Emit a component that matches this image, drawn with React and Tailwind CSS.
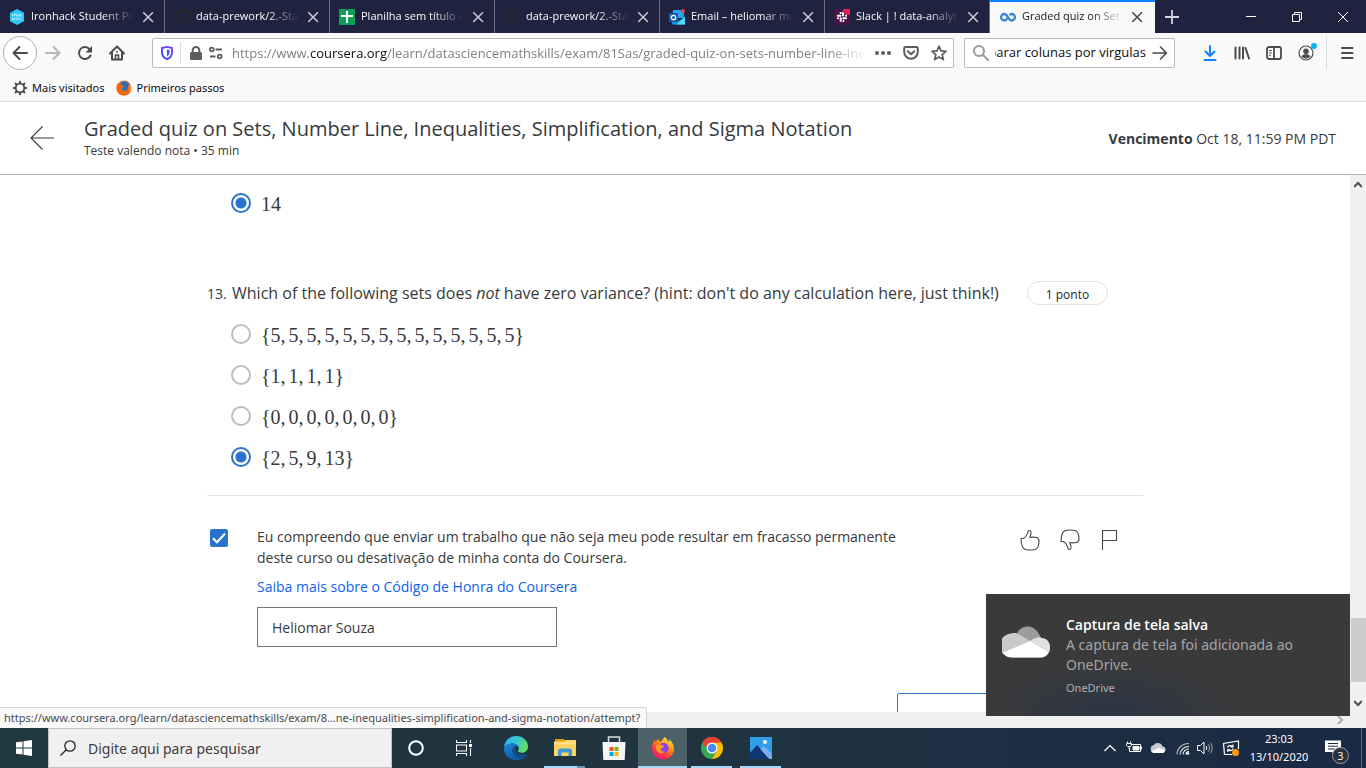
import React from "react";

function CloseIcon({ className }) {
  return (
    <svg viewBox="0 0 16 16" className={className} fill="none" stroke="currentColor" strokeWidth="1.6" strokeLinecap="round">
      <path d="M3.700 3.700l8.800 8.800M12.500 3.700l-8.800 8.800" />
    </svg>
  );
}

function IronhackIcon() {
  return (
    <svg viewBox="0 0 16 16" className="size-4 shrink-0">
      <path d="M8 0l7 3.800v8.400L8 16l-7-3.800V3.800z" fill="#2dc5fa" />
      <path d="M3.500 5.200v2.200M5 5.200h1.400v1H5zM5 7.400V5M7.600 5.200h1.600v2H7.600zM10.400 7.400V5.200l1.600 2.200V5M3.600 9v2M5.200 9v2M3.600 10h1.600M7 11V9.200h1V11M9.800 9.200h1M9.800 9.200V11h1M12 9v2" stroke="#d5f4ff" strokeWidth=".7" fill="none" />
    </svg>
  );
}

function GithubIcon() {
  return (
    <svg viewBox="0 0 16 16" className="size-4 shrink-0" fill="#24292e">
      <path d="M8 0C3.58 0 0 3.58 0 8c0 3.54 2.29 6.53 5.47 7.59.4.07.55-.17.55-.38 0-.19-.01-.82-.01-1.49-2.01.37-2.53-.49-2.69-.94-.09-.23-.48-.94-.82-1.13-.28-.15-.68-.52-.01-.53.63-.01 1.08.58 1.23.82.72 1.21 1.87.87 2.33.66.07-.52.28-.87.51-1.07-1.78-.2-3.64-.89-3.64-3.95 0-.87.31-1.59.82-2.15-.08-.2-.36-1.02.08-2.12 0 0 .67-.21 2.2.82.64-.18 1.32-.27 2-.27s1.36.09 2 .27c1.53-1.04 2.2-.82 2.2-.82.44 1.1.16 1.92.08 2.12.51.56.82 1.27.82 2.15 0 3.07-1.87 3.75-3.65 3.95.29.25.54.73.54 1.48 0 1.07-.01 1.93-.01 2.2 0 .21.15.46.55.38A8.01 8.01 0 0016 8c0-4.42-3.58-8-8-8z" />
    </svg>
  );
}

function SheetsIcon() {
  return (
    <svg viewBox="0 0 16 16" className="size-4 shrink-0">
      <rect width="16" height="16" rx="1" fill="#0f9d58" />
      <path d="M7 2h2v4h5v2H9v6H7V8H2V6h5z" fill="#fff" />
    </svg>
  );
}

function OutlookIcon() {
  return (
    <svg viewBox="0 0 16 16" className="size-4 shrink-0">
      <path d="M4 1h11v8H4z" fill="#28a8ea" />
      <path d="M4 5h5v4H4z" fill="#0364b8" />
      <path d="M3 8l6 4 7-4v7.500H3z" fill="#1490df" />
      <path d="M16 8l-9 7.500h9z" fill="#50d9ff" />
      <rect y="4" width="9" height="9" rx=".6" fill="#0a5fb4" />
      <circle cx="4.500" cy="8.500" r="2.200" fill="none" stroke="#fff" strokeWidth="1.300" />
      <circle cx="14" cy="2" r="2" fill="#e8413c" />
    </svg>
  );
}

function SlackIcon() {
  return (
    <svg viewBox="0 0 16 16" className="size-4 shrink-0">
      <rect width="16" height="16" rx="1" fill="#4a154b" />
      <path d="M9 3.800v2.700M3.800 6.700h2.700M6.700 9.300V12M9.300 9.300H12" stroke="#fff" strokeWidth="2" strokeLinecap="round" />
      <path d="M6.500 3.900h.2M12 6.800h.1M3.900 9.300h.1M9.300 12h.1" stroke="#fff" strokeWidth="2" strokeLinecap="round" />
      <path d="M9 0h7v6h-4.500L9 3z" fill="#e01e5a" />
    </svg>
  );
}

function CourseraIcon() {
  return (
    <svg viewBox="0 0 16 16" className="size-4 shrink-0" fill="none" stroke="#3b87d3" strokeWidth="2.300">
      <path d="M8 8.200C6.800 10.300 5.800 11.500 4.300 11.500a3.200 3.200 0 010-6.500C6 5 6.900 6.100 8 8.200s2 3.300 3.700 3.300a3.200 3.200 0 000-6.500c-.9 0-1.600.4-2.200 1" />
    </svg>
  );
}

const tabs = [
  { title: "Ironhack Student Po", Icon: IronhackIcon },
  { title: "data-prework/2.-Sta", Icon: GithubIcon },
  { title: "Planilha sem título -", Icon: SheetsIcon },
  { title: "data-prework/2.-Sta", Icon: GithubIcon },
  { title: "Email – heliomar ma", Icon: OutlookIcon },
  { title: "Slack | ! data-analyti", Icon: SlackIcon },
  { title: "Graded quiz on Sets,", Icon: CourseraIcon, active: true },
];

function TabBar() {
  return (
    <div className="flex h-[33px] shrink-0 bg-[#202340] text-[11px] text-[#f9f9fa]">
      {tabs.map(({ title, Icon, active }, i) => (
        <div
          key={i}
          className={
            active
              ? "flex w-[165px] min-w-0 items-center gap-1.5 border-t-2 border-[#0a84ff] bg-[#f9f9fa] pr-2.5 pl-2.5 pb-0.5 text-[#15141a]"
              : "flex w-[165px] min-w-0 items-center gap-1.5 border-r border-[#6b6d80] pr-2 pl-[9px]"
          }
        >
          <Icon />
          <span className="min-w-0 flex-1 whitespace-nowrap [mask-image:linear-gradient(to_left,transparent,black_32px)]">{title}</span>
          <button aria-label="Fechar aba" className={active ? "text-[#4a4a4f]" : "text-[#c8c8d2]"}>
            <CloseIcon className="size-4" />
          </button>
        </div>
      ))}
      <button aria-label="Nova aba" className="grid w-[34px] place-items-center text-[#d5d5dd]">
        <svg viewBox="0 0 16 16" className="size-4" stroke="currentColor" strokeWidth="1.800"><path d="M8 1v14M1 8h14" /></svg>
      </button>
      <div className="ml-auto flex">
        <button aria-label="Minimizar" className="grid w-[46px] place-items-center">
          <svg viewBox="0 0 10 10" className="size-2.5" stroke="#fff"><path d="M0 4.500h10" /></svg>
        </button>
        <button aria-label="Restaurar" className="grid w-[46px] place-items-center">
          <svg viewBox="0 0 10 10" className="size-2.5" fill="none" stroke="#fff"><path d="M.5 2.500h7v7h-7zM2.500 2.500v-2h7v7h-2" /></svg>
        </button>
        <button aria-label="Fechar" className="grid w-[46px] place-items-center">
          <svg viewBox="0 0 10 10" className="size-2.5" stroke="#fff"><path d="M0 0l10 10M10 0L0 10" /></svg>
        </button>
      </div>
    </div>
  );
}

function ToolButton({ label, className, children }) {
  return (
    <button aria-label={label} className={"grid h-8 w-8 shrink-0 place-items-center " + (className || "text-[#4a4a4f]")}>
      {children}
    </button>
  );
}

const stroke = { fill: "none", stroke: "currentColor", strokeWidth: 2, strokeLinecap: "round", strokeLinejoin: "round" };

function NavBar() {
  return (
    <div className="flex h-10 shrink-0 items-center bg-[#f9f9fa] px-[3px]">
      <button aria-label="Voltar" className="grid size-[34px] shrink-0 place-items-center rounded-full border border-[#b1b1b3] bg-white text-[#4a4a4f]">
        <svg viewBox="0 0 16 16" className="size-4" {...stroke}><path d="M15 8H1.500M7.500 2l-6 6 6 6" /></svg>
      </button>
      <ToolButton label="Avançar" className="text-[#b5b5b8]">
        <svg viewBox="0 0 16 16" className="size-4" {...stroke}><path d="M1 8h13.500M8.500 2l6 6-6 6" /></svg>
      </ToolButton>
      <ToolButton label="Recarregar">
        <svg viewBox="0 0 16 16" className="size-4" {...stroke}>
          <path d="M13.500 10.500A6 6 0 118 2c2 0 3.700 1 4.800 2.500" />
          <path d="M15 1v6.500H8.500z" fill="currentColor" stroke="none" />
        </svg>
      </ToolButton>
      <ToolButton label="Página inicial">
        <svg viewBox="0 0 16 16" className="size-4" {...stroke}>
          <path d="M1 8.500L8 1.500l7 7M3 8v6.500h10V8" />
          <path d="M6.500 14v-4h3v4M8 6.500v.5" strokeWidth="1.600" />
        </svg>
      </ToolButton>
      <div className="ml-[19px] flex h-[30px] min-w-0 flex-1 items-center rounded-xs border border-[#b8b8ba] bg-white text-[#5b5b60]">
        <svg viewBox="0 0 16 16" className="ml-1.5 size-4 shrink-0">
          <defs><linearGradient id="shield" x1="0" y1="1" x2="1" y2="0"><stop stopColor="#2b4ff0" /><stop offset="1" stopColor="#8b3ff5" /></linearGradient></defs>
          <path d="M8 1.800l5 1.200v4.500c0 3-1.800 5.300-5 6.700-3.200-1.400-5-3.700-5-6.700V3z" fill="none" stroke="url(#shield)" strokeWidth="1.900" strokeLinejoin="round" />
          <path d="M8 4.500v7c-1.600-.8-2.500-2.200-2.500-4v-2.500z" fill="#3f4cf2" transform="matrix(-1 0 0 1 16 0)" />
        </svg>
        <span className="mx-[5px] h-[22px] w-px shrink-0 bg-[#dcdcde]" />
        <svg viewBox="0 0 16 16" className="ml-0.5 size-4 shrink-0">
          <rect x="2" y="7" width="12" height="8" rx="1.500" fill="currentColor" />
          <path d="M4.700 8V5.200a3.300 3.300 0 016.600 0V8" fill="none" stroke="currentColor" strokeWidth="2" />
        </svg>
        <svg viewBox="0 0 16 16" className="ml-1 size-4 shrink-0" fill="none" stroke="currentColor" strokeWidth="1.800">
          <circle cx="3.800" cy="4.500" r="1.900" /><path d="M7.500 4.500H14M2 11.500h5.500" /><circle cx="11.700" cy="11.500" r="1.900" />
        </svg>
        <span className="ml-2 min-w-0 flex-1 pt-0.5 text-[13px] whitespace-nowrap text-[#808085] [mask-image:linear-gradient(to_left,transparent,black_40px)]">
          https://www.<span className="text-[#0c0c0d]">coursera.org</span>/learn/datasciencemathskills/exam/81Sas/graded-quiz-on-sets-number-line-ine
        </span>
        <button aria-label="Ações da página" className="ml-2">
          <svg viewBox="0 0 16 16" className="size-4" fill="currentColor"><circle cx="2" cy="8" r="2" /><circle cx="8" cy="8" r="2" /><circle cx="14" cy="8" r="2" /></svg>
        </button>
        <button aria-label="Salvar no Pocket" className="ml-3">
          <svg viewBox="0 0 16 16" className="size-4" {...stroke}><path d="M2.500 2h11c.8 0 1.300.5 1.300 1.300V7a6.800 6.800 0 01-13.600 0V3.300C1.200 2.500 1.700 2 2.500 2z" /><path d="M4.800 6.300L8 9.300l3.200-3" /></svg>
        </button>
        <button aria-label="Favoritar" className="mr-1.5 ml-3">
          <svg viewBox="0 0 16 16" className="size-4" {...stroke} strokeWidth="1.700"><path d="M8 1.200l2 4.600 5 .5-3.800 3.300 1.200 5L8 12l-4.400 2.600 1.200-5L1 6.300l5-.5z" /></svg>
        </button>
      </div>
      <div className="ml-2.5 flex h-[30px] w-[211px] shrink-0 items-center rounded-xs border border-[#b8b8ba] bg-white pr-1.5 pl-2">
        <svg viewBox="0 0 16 16" className="size-4 shrink-0 text-[#9b9b9e]" {...stroke}><circle cx="6" cy="6" r="5" /><path d="M10 10l5 5" /></svg>
        <label className="ml-1.5 flex h-5 min-w-0 flex-1 justify-end overflow-hidden">
          <input aria-label="Pesquisar" className="w-[190px] shrink-0 bg-transparent text-right text-[13px] text-[#0c0c0d] outline-none" defaultValue="parar colunas por virgulas" />
        </label>
        <button aria-label="Ir" className="ml-1.5 text-[#4a4a4f]">
          <svg viewBox="0 0 16 16" className="size-4" {...stroke} strokeWidth="1.600"><path d="M1 8h13.500M8.500 2l6 6-6 6" /></svg>
        </button>
      </div>
      <div className="ml-[19px] flex items-center">
        <ToolButton label="Downloads" className="text-[#0a84ff]">
          <svg viewBox="0 0 16 16" className="size-4" {...stroke}><path d="M8 1v9.500M3.500 6.500L8 11l4.500-4.500M2.500 15h11" /></svg>
        </ToolButton>
        <ToolButton label="Biblioteca">
          <svg viewBox="0 0 16 16" className="size-4" {...stroke}><path d="M1.500 2.500v11M5.500 2.500v11M9 2.500v11M11.500 3L15 13.500" /></svg>
        </ToolButton>
        <ToolButton label="Barra lateral">
          <svg viewBox="0 0 16 16" className="size-4" {...stroke} strokeWidth="1.800"><rect x="1" y="2" width="14" height="12" rx="2" /><path d="M8 2v12" /><path d="M3.500 5.500h2M3.500 8h2M3.500 10.500h1" strokeWidth="1" /></svg>
        </ToolButton>
        <div className="relative">
          <ToolButton label="Conta">
            <svg viewBox="0 0 16 16" className="size-4" fill="currentColor"><circle cx="8" cy="8" r="7" fill="none" stroke="currentColor" strokeWidth="1.200" /><circle cx="8" cy="6.300" r="2.800" /><path d="M3.500 11.500c1-1.800 2.500-2.300 4.500-2.300s3.500.5 4.500 2.300A5.600 5.600 0 018 13.500a5.600 5.600 0 01-4.500-2z" /></svg>
          </ToolButton>
          <span className="absolute top-1.5 right-[5px] size-1.5 rounded-full bg-[#00b3f4]" />
        </div>
        <span className="mr-1 ml-1 h-[34px] w-px bg-[#dcdcde]" />
        <ToolButton label="Menu">
          <svg viewBox="0 0 16 16" className="size-4" {...stroke}><path d="M3 3h10.500M3 8h10.500M3 13h10.500" /></svg>
        </ToolButton>
      </div>
    </div>
  );
}

function FirefoxIcon({ className }) {
  return (
    <svg viewBox="0 0 24 24" className={className}>
      <defs>
        <linearGradient id="fx" x1=".8" y1="0" x2=".2" y2="1"><stop stopColor="#fff44f" /><stop offset=".35" stopColor="#ff980e" /><stop offset=".7" stopColor="#ff3647" /><stop offset="1" stopColor="#e31587" /></linearGradient>
      </defs>
      <path d="M13 1c3 1.200 4 3.500 4.200 5 1-.5 1-1.800.8-2.700 3 2.500 5 5.600 5 9.500C23 19 18 23.500 12 23.500S1 18.500 1 12.500C1 9 2 6 3.800 3.800c0 1 .2 1.800.8 2.500C5.500 4.500 6.500 3.500 7.500 3c0 1.200.5 2.200 1.500 2.800 1.800-1 3.800-2.600 4-4.800z" fill="url(#fx)" />
      <circle cx="12.500" cy="12" r="5" fill="#8a3ff0" />
      <path d="M5 10c2-1.800 4.500-1.800 6.500-.8 1.500.5 2 1.300 1.300 2-1.500.3-3 .8-3 2.300 0 1.700 2 2.500 4 1.800-1 1.700-3 2.500-5.300 1.900C6 16.300 4.500 13.500 5 10z" fill="#ff9a1f" />
    </svg>
  );
}

function Bookmarks() {
  return (
    <nav className="flex h-[29px] shrink-0 items-center gap-3 border-b border-[#dcdcde] bg-[#f9f9fa] px-3 pt-0.5 font-['Noto_Sans',sans-serif] text-[11px] text-[#0c0c0d]">
      <a href="#visitados" className="flex items-center gap-1">
        <svg viewBox="0 0 16 16" className="size-4" fill="none" stroke="#4a4a4f">
          <circle cx="8" cy="8" r="4.300" strokeWidth="1.800" />
          <path d="M8 1v3M8 12v3M1 8h3M12 8h3M3 3l2.200 2.200M10.800 10.800L13 13M13 3l-2.200 2.200M5.200 10.800L3 13" strokeWidth="2" />
        </svg>
        Mais visitados
      </a>
      <a href="#passos" className="flex items-center gap-1">
        <svg viewBox="0 0 16 16" className="size-4">
          <circle cx="8" cy="8" r="7.500" fill="#f07c12" />
          <circle cx="8.500" cy="6.500" r="5.300" fill="#2f6bbd" />
          <path d="M1 4c2-1 3.500 0 5 1 1 .6 2.500.5 2 1.700-.8 1.200-2 1-2 2.400 0 1.500 2.500 2.200 5 .8 1.200-.8 1.600-2.800 1.500-5.400C15 7 15.500 9 14.500 11.500 13 14.500 10.500 15.500 8 15.500 3.500 15.500.5 12.500.5 8c0-1.500 0-2.800.5-4z" fill="#ee6a12" />
          <path d="M13 4c2 2.500 2 6 .3 8.500.3-2.500.5-5.500-.3-8.500z" fill="#fdc820" />
        </svg>
        Primeiros passos
      </a>
    </nav>
  );
}

function QuizHeader() {
  return (
    <header className="flex h-[73px] shrink-0 items-center border-b border-[#b5b5b5] bg-white pr-[30px] pl-[30px] text-[#373a3c]">
      <a href="#voltar" aria-label="Voltar ao curso">
        <svg viewBox="0 0 24 24" className="size-6" fill="none" stroke="#373a3c" strokeWidth="1.100"><path d="M24 12H1M12.500 .5L1 12l11.500 11.500" /></svg>
      </a>
      <div className="ml-[30px] flex-1 pt-0.5">
        <h1 className="text-[20px] leading-6">Graded quiz on Sets, Number Line, Inequalities, Simplification, and Sigma Notation</h1>
        <p className="text-[12px] leading-5">Teste valendo nota • 35 min</p>
      </div>
      <p className="text-[14px]"><b>Vencimento</b> Oct 18, 11:59 PM PDT</p>
    </header>
  );
}

function Option({ name, items, set, checked }) {
  return (
    <label className="flex h-[41px] items-center gap-2.5 pl-6">
      <input
        type="radio"
        name={name}
        defaultChecked={checked}
        className="size-5 appearance-none rounded-full border-2 border-[#bdbdbd] bg-white checked:border-[#2a73cc] checked:bg-[radial-gradient(circle,#2a73cc_5px,white_6px)]"
      />
      <span className="pt-0.5 font-['Liberation_Serif',serif] text-[20px] text-[#373a3c]">
        {set && "{"}
        {items.map((n, i) => (
          <span key={i} className="not-last:mr-[3px]">{i < items.length - 1 ? n + "," : set ? n + "}" : n}</span>
        ))}
      </span>
    </label>
  );
}

function Quiz() {
  return (
    <main className="mx-auto w-full max-w-[936px] text-[#373a3c]">
      <div className="pt-[7px]">
        <Option name="q12" items={[14]} checked />
      </div>
      <fieldset className="mt-[58px]">
        <div className="flex h-6 items-center">
          <span className="w-[25px] text-[14px]">13.</span>
          <span className="flex-1 text-[16px]">
            Which of the following sets does <i>not</i> have zero variance? (hint: don't do any calculation here, just think!)
          </span>
          <span className="mr-[35px] flex h-6 w-[81px] items-center justify-center rounded-full border border-[#e1e1e1] pt-1 text-[12px] text-[#1f1f1f]">1 ponto</span>
        </div>
        <div className="pt-2">
          <Option name="q13" set items={Array(14).fill(5)} />
          <Option name="q13" set items={[1, 1, 1, 1]} />
          <Option name="q13" set items={Array(7).fill(0)} />
          <Option name="q13" set items={[2, 5, 9, 13]} checked />
        </div>
      </fieldset>
      <div className="mt-[18px] flex items-start border-t border-[#e1e1e1] pt-[30px]">
        <span className="relative mt-[3px] ml-[3px] block size-[18px]">
          <input id="honor" type="checkbox" defaultChecked className="block size-[18px] appearance-none rounded-xs bg-[#2a73cc]" />
          <svg viewBox="0 0 18 18" className="pointer-events-none absolute inset-0" fill="none" stroke="#fff" strokeWidth="2"><path d="M3 9.200l4 4 8-8.700" /></svg>
        </span>
        <div className="ml-[29px] flex-1 text-[14px] leading-[21px]">
          <label htmlFor="honor" className="block max-w-[660px]">
            Eu compreendo que enviar um trabalho que não seja meu pode resultar em fracasso permanente deste curso ou desativação de minha conta do Coursera.
          </label>
          <a href="#honra" className="mt-2 block text-[#0f62e6]">Saiba mais sobre o Código de Honra do Coursera</a>
          <input aria-label="Nome" defaultValue="Heliomar Souza" className="mt-2.5 block h-10 w-[300px] border border-[#757575] px-3.5" />
        </div>
        <div className="mt-[3px] mr-[22px] flex gap-[18px] text-[#41474f]">
          <button aria-label="Gostei">
            <svg viewBox="0 0 22 22" className="size-[22px]" fill="none" stroke="currentColor" strokeWidth="1.100" strokeLinejoin="round"><path d="M2 9.500h2.500c2.500-1.500 3.800-4 4.500-7C9.400 1 11.600 1 12 3c.2 2-.5 3.700-1.200 5.500 2-.5 4.500-.5 6.700 0 2 .5 2.700 2.500 2.500 4.500-.2 3.500-1 6.500-4 7.500-3 .6-7 .6-9.500 0C3.500 19.500 2 15 2 9.500z" /></svg>
          </button>
          <button aria-label="Não gostei">
            <svg viewBox="0 0 22 22" className="size-[22px]" fill="none" stroke="currentColor" strokeWidth="1.100" strokeLinejoin="round"><path d="M2 12.500h2.500c2.500 1.500 3.800 4 4.500 7 .4 1.500 2.600 1.500 3-.5.2-2-.5-3.700-1.200-5.500 2 .5 4.500.5 6.700 0 2-.5 2.700-2.500 2.500-4.500-.2-3.500-1-6.500-4-7.500-3-.6-7-.6-9.500 0C3.500 2.500 2 7 2 12.500z" /></svg>
          </button>
          <button aria-label="Sinalizar">
            <svg viewBox="0 0 22 22" className="size-[22px]" fill="none" stroke="currentColor" strokeWidth="1.100"><path d="M3.500 21V1.500h14v10h-14" /></svg>
          </button>
        </div>
      </div>
      <div className="mt-[46px] flex justify-end">
        <button aria-label="Enviar" className="h-12 w-[246px] rounded-xs border border-[#2a73cc] bg-white" />
      </div>
    </main>
  );
}

function Chevron({ d }) {
  return (
    <svg viewBox="0 0 8 8" className="size-2" fill="none" stroke="currentColor" strokeWidth="2"><path d={d} /></svg>
  );
}

function Toast() {
  return (
    <aside className="absolute right-4 bottom-3 flex h-[122px] w-[364px] bg-[#3a3a3a] bg-[radial-gradient(ellipse_130px_60px_at_35%_100%,#2c3545,transparent)] pt-[21px] pl-4">
      <svg viewBox="0 0 48 32" className="mt-[11px] h-8 w-12 shrink-0">
        <defs><clipPath id="cloud"><path d="M10 31.500a10.500 10.500 0 010-24c2-.6 3.500-.5 5 0C18 1 26-1.500 32 2.500c4 2.500 5.500 6 7 9.500 5.500 0 9 4 9 9.500s-4 10-9 10z" /></clipPath></defs>
        <g clipPath="url(#cloud)">
          <rect width="48" height="32" fill="#9c9c9c" />
          <path d="M0 6h12c4 1 9 5 16 9L0 28z" fill="#c9c9c9" />
          <path d="M28 15c3-2 8-5 20-4v16z" fill="#e0e0e0" />
          <path d="M0 27l28-12 20 12v5H0z" fill="#fff" />
        </g>
      </svg>
      <div className="ml-4 text-[14px] leading-5 text-[#a5a5a5]">
        <p className="font-semibold text-white">Captura de tela salva</p>
        <p className="w-60 font-['Noto_Sans',sans-serif]">A captura de tela foi adicionada ao OneDrive.</p>
        <p className="mt-[3px] font-['Noto_Sans',sans-serif] text-[11px] text-[#b0b0b0]">OneDrive</p>
      </div>
    </aside>
  );
}

function Viewport() {
  return (
    <section className="relative flex min-h-0 flex-1">
      <div className="flex min-w-0 flex-1 flex-col">
        <div className="min-h-0 flex-1 overflow-hidden bg-white"><Quiz /></div>
        <div className="flex h-4 shrink-0 items-center justify-end bg-[#f0f0f0] pr-1.5 text-[#a8a8a8]"><Chevron d="M2 0l4 4-4 4" /></div>
      </div>
      <div className="flex w-4 shrink-0 flex-col items-center justify-between bg-[#f0f0f0] pt-1.5 pb-[21px] text-[#505050]">
        <Chevron d="M0 6l4-4 4 4" />
        <div className="mt-auto mb-[17px] h-16 w-[15px] bg-[#cdcdcd]" />
        <Chevron d="M0 2l4 4 4-4" />
      </div>
      <div className="absolute bottom-0 left-0 h-[21px] rounded-tr-xs border-t border-r border-[#d5d5d5] bg-[#f9f9fa] pr-1.5 pl-1 font-['Noto_Sans',sans-serif] text-[11px] leading-5 text-[#4a4a4f]">
        https://www.coursera.org/learn/datasciencemathskills/exam/8...ne-inequalities-simplification-and-sigma-notation/attempt?
      </div>
      <Toast />
    </section>
  );
}

function AppButton({ label, state, children }) {
  return (
    <button aria-label={label} className={"relative grid h-10 w-[49px] place-items-center " + (state === "active" ? "bg-[#4e6068]" : "")}>
      {children}
      {state === "active" && <span className="absolute inset-x-0 bottom-0 h-0.5 bg-[#a5d8fb]" />}
      {state === "open" && <span className="absolute inset-x-1 bottom-0 h-0.5 bg-[#a5d8fb]" />}
      {state === "many" && <span className="absolute inset-x-1 bottom-0 h-0.5 border-r-8 border-[#6f93ab] bg-[#a5d8fb]" />}
    </button>
  );
}

function Taskbar() {
  return (
    <footer className="flex h-10 shrink-0 items-center bg-linear-to-r from-[#20373f] via-[#20343f] to-[#1a2944] text-white">
      <button aria-label="Iniciar" className="grid h-10 w-12 place-items-center">
        <svg viewBox="0 0 16 16" className="size-4" fill="#fff"><path d="M0 2.300L6.500 1.400v6.100H0zM7.500 1.200L16 0v7.500H7.500zM0 8.500h6.500v6.100L0 13.700zM7.500 8.500H16V16l-8.500-1.200z" /></svg>
      </button>
      <label className="flex h-10 w-[344px] items-center gap-3 border border-[#c2c2c2] bg-[#f0f0f0] px-[11px]">
        <svg viewBox="0 0 16 16" className="size-4 shrink-0" fill="none" stroke="#222" strokeWidth="1.300"><circle cx="10" cy="6" r="5.200" /><path d="M6.300 9.700L.5 15.500" /></svg>
        <input aria-label="Pesquisar no computador" placeholder="Digite aqui para pesquisar" className="min-w-0 flex-1 bg-transparent font-['Noto_Sans',sans-serif] text-[14px] outline-none placeholder:text-[#3d3d3d]" />
      </label>
      <button aria-label="Cortana" className="grid h-10 w-12 place-items-center">
        <svg viewBox="0 0 16 16" className="size-4" fill="none" stroke="#fff" strokeWidth="2"><circle cx="8" cy="8" r="6.800" /></svg>
      </button>
      <button aria-label="Visão de tarefas" className="grid h-10 w-12 place-items-center">
        <svg viewBox="0 0 16 16" className="size-4" fill="none" stroke="#fff" strokeWidth="1.100"><path d="M.5 0v2.500h10V0M.5 5h10v6H.5zM.5 16v-2.500h10V16M14.500 0v3M14.500 8v8" /><path d="M13 4h3v3h-3z" fill="#fff" stroke="none" /></svg>
      </button>
      <div className="ml-[3px] flex">
        <AppButton label="Edge">
          <svg viewBox="0 0 24 24" className="size-6">
            <defs>
              <linearGradient id="edgeTop" x1="0" y1=".3" x2="1" y2=".6"><stop stopColor="#2bb3ee" /><stop offset=".5" stopColor="#35c8d5" /><stop offset="1" stopColor="#68e04f" /></linearGradient>
              <linearGradient id="edgeLow" x1="0" y1="0" x2=".6" y2="1"><stop stopColor="#1c87d8" /><stop offset="1" stopColor="#0c59a4" /></linearGradient>
            </defs>
            <path d="M0 11.500C.5 5 5.500 0 12 0c7 0 12 5 12 10.500 0 4-3 6.300-6.200 6.300-2.500 0-4-.8-4-1.500 0-.6 1-1 1-2.800C14.800 10 12 7.500 8.500 7.500 4.500 7.500 1.500 9.500 0 11.500z" fill="url(#edgeTop)" />
            <path d="M0 12.500C1 9.500 4.500 7.500 8.500 7.500c2.500 0 4.500 1 5.500 2.500-3-1-5.500 1-5.500 4.500 0 4.500 4 7 8 7 2.500 0 4.500-1 5.700-2C20 22.500 16.500 24 12.500 24 5 24-.5 18.500 0 12.500z" fill="url(#edgeLow)" />
            <path d="M8.500 14.500c0-3 2-5 5-4.500-2 1.500-2.500 4-1 6 2.500 3 7 3 10.200 1.500.5 0 .6.500.4 1C19 23 9 22 8.500 14.500z" fill="#134f8d" />
          </svg>
        </AppButton>
        <AppButton label="Explorador de Arquivos" state="many">
          <svg viewBox="0 0 22 20" className="h-5 w-[22px]">
            <path d="M1 1h9l1 2h-1v4H1z" fill="#e09d0c" /><path d="M0 3.500h10L11 2h11v16H0z" fill="#fcd462" /><path d="M0 4h22v2H0z" fill="#ffe08a" />
            <path d="M4 18v-5c0-1.500.8-2.500 2.500-2.500h9c1.700 0 2.500 1 2.500 2.500v5h-3.500v-3.500h-7V18z" fill="#3d97dc" />
          </svg>
        </AppButton>
        <AppButton label="Microsoft Store">
          <svg viewBox="0 0 24 24" className="size-6">
            <path d="M6.500 6V1h11v5" fill="none" stroke="#dcdcdc" strokeWidth="1.500" /><path d="M.5 6h23l-.8 18H1.300z" fill="#f5f5f5" />
            <path d="M7.500 11h4v4h-4z" fill="#f25022" /><path d="M12.500 11h4v4h-4z" fill="#7fba00" /><path d="M7.500 16h4v4h-4z" fill="#00a4ef" /><path d="M12.500 16h4v4h-4z" fill="#ffb900" />
          </svg>
        </AppButton>
        <AppButton label="Firefox" state="active"><FirefoxIcon className="size-6" /></AppButton>
        <AppButton label="Chrome" state="open">
          <svg viewBox="0 0 24 24" className="size-6">
            <path d="M12 12L2.470 6.500A11 11 0 0121.530 6.500z" fill="#e94335" />
            <path d="M12 12V6.500h9.530A11 11 0 0112 23l-1-1z" fill="#fbbc05" />
            <path d="M12 12l4.760 2.750L12 23A11 11 0 012.470 6.500z" fill="#34a853" />
            <path d="M12 6.500H2.470A11 11 0 0121.530 6.500z" fill="#e94335" />
            <path d="M2.470 6.500L7.240 14.750 12 12l-.5-5.500z" fill="#34a853" />
            <path d="M2.470 6.500h9.530l-4.760 8.250z" fill="#34a853" />
            <path d="M2.470 6.500A11 11 0 0112 1v5.500a5.500 5.500 0 00-4.760 2.750l-1.500 3z" fill="#e94335" />
            <circle cx="12" cy="12" r="5.500" fill="#fff" /><circle cx="12" cy="12" r="4.300" fill="#4a8af4" />
          </svg>
        </AppButton>
        <AppButton label="Fotos" state="open">
          <svg viewBox="0 0 22 22" className="size-[22px]">
            <rect width="22" height="22" fill="#2c9eea" /><path d="M0 16l7-8 13 14H0z" fill="#123a78" /><path d="M10 12l4-3 8 8v5h-3z" fill="#7aaeea" /><path d="M0 16l7-7 12 13H0z" fill="#0f3672" /><circle cx="15" cy="5" r="2" fill="#fff" />
          </svg>
        </AppButton>
      </div>
      <div className="ml-auto flex items-center">
        <button aria-label="Ícones ocultos" className="grid w-6 place-items-center">
          <svg viewBox="0 0 12 12" className="size-3" fill="none" stroke="#fff" strokeWidth="1.200"><path d="M.5 9L6 3.500 11.500 9" /></svg>
        </button>
        <button aria-label="Bateria" className="grid w-6 place-items-center">
          <svg viewBox="0 0 16 16" className="size-4" fill="none" stroke="#fff"><path d="M4.500 4.500h10v7H3.500V8M15.500 6.500v3" /><path d="M7 6.500h6v3.500H7z" fill="#fff" /><path d="M1.500 1.500v2M4.500 1.500v2M.5 3.500h5v2l-1 1h-3l-1-1zM3 7v2" /></svg>
        </button>
        <button aria-label="OneDrive" className="grid w-6 place-items-center">
          <svg viewBox="0 0 16 16" className="size-4"><path d="M4 12.500a3.700 3.700 0 01-.5-7.300A5 5 0 0112.500 6.500a3 3 0 010 6z" fill="#c8ccd2" /><path d="M2 12l7-4 5 4-1 1H4z" fill="#fff" /><path d="M1 11.500L9 8l6 2.500-1.500 2.500H3.500z" fill="#fff" /></svg>
        </button>
        <button aria-label="Rede" className="grid w-[25px] place-items-center">
          <svg viewBox="0 0 16 16" className="size-4" fill="none" stroke="#fff" strokeWidth="1.100"><path d="M2 14.500C2 8.500 7 3.500 14 3.500" opacity=".7" /><path d="M5 14.500C5 10 9 6.500 14 6.500M8 14.500c0-3 2.500-5.500 6-5.500" /><path d="M11 14.500c0-1.500 1-3 3-3" /><circle cx="13" cy="13.500" r="1.200" fill="#fff" stroke="none" /></svg>
        </button>
        <button aria-label="Volume" className="grid w-5 place-items-center">
          <svg viewBox="0 0 16 16" className="size-4" fill="none" stroke="#fff"><path d="M.5 5.500h3l3.500-3.500v12L3.500 10.500h-3z" /><path d="M9 6c1 1 1 3 0 4" /><path d="M11 4.200c2 2 2 5.600 0 7.600M13.200 2.500c2.500 3 2.500 8 0 11" opacity=".6" /></svg>
        </button>
        <button aria-label="Atualização" className="grid w-8 place-items-center">
          <svg viewBox="0 0 18 18" className="size-[18px]" fill="none" stroke="#fff" strokeWidth="1.200"><path d="M10 15.500H2.500L1.500 4.500l15-2.500v8" /><path d="M5.500 8.500C6 6.500 9 6 10.500 7.500M11 5.500v2.500H8.500M11 9.500c-.5 2.500-3.500 3-5 1M5.800 13v-2.500h2.500" /><circle cx="13.500" cy="13.500" r="3.500" fill="#ff9a0c" stroke="none" /></svg>
        </button>
        <div className="w-16 text-center font-['Noto_Sans',sans-serif] text-[11px] leading-[18px]">
          <p>23:03</p>
          <p>13/10/2020</p>
        </div>
        <button aria-label="Notificações" className="relative ml-2.5 grid h-10 w-10 place-items-center">
          <svg viewBox="0 0 16 16" className="mr-4 size-4"><path d="M0 .5h16V12h-5v4l-4-4H0z" fill="#fff" /><path d="M3 3.500h10M3 6.200h10M3 9h7" stroke="#1c2a45" /></svg>
          <span className="absolute right-3 bottom-1 grid size-[17px] place-items-center rounded-full border border-[#9aa0a8] bg-[#2b3038] text-[11px] leading-none">3</span>
        </button>
        <span className="mr-1 h-10 w-px bg-[#5b6880]" />
      </div>
    </footer>
  );
}

export default function App() {
  return (
    <div className="flex h-screen flex-col overflow-hidden bg-white font-['Open_Sans',sans-serif]">
      <TabBar />
      <NavBar />
      <Bookmarks />
      <QuizHeader />
      <Viewport />
      <Taskbar />
    </div>
  );
}
